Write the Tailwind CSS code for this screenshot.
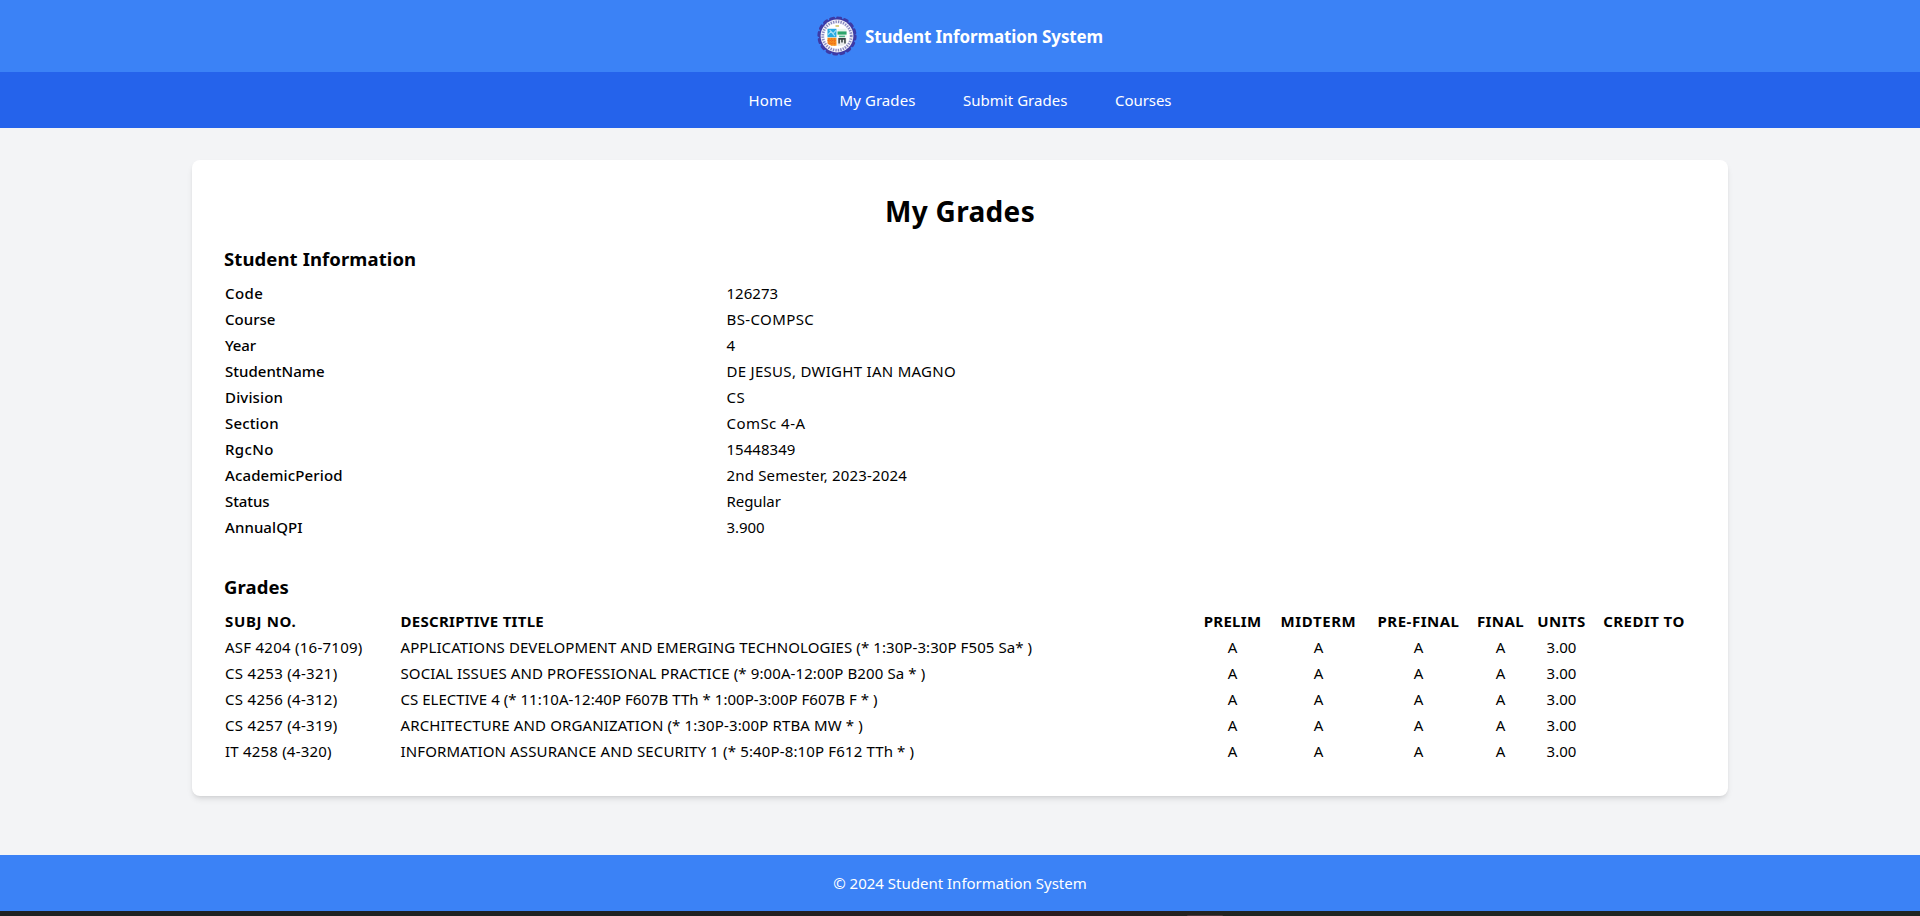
<!DOCTYPE html>
<html lang="en">
<head>
<meta charset="utf-8">
<title>Student Information System</title>
<script src="https://cdn.jsdelivr.net/npm/@tailwindcss/browser@4"></script>
</head>
<body class="flex h-screen flex-col overflow-hidden bg-[#f3f4f6] font-[family-name:'Noto_Sans','Open_Sans',sans-serif] text-[15px] leading-6 text-black">
<header class="flex h-[72px] shrink-0 items-center justify-center gap-2 bg-[#3b82f6] text-white">
  <svg class="size-10" viewBox="0 0 40 40" aria-hidden="true">
    <circle cx="20" cy="20" r="18" fill="#3d3aa5"/>
    <circle cx="20" cy="20" r="18.2" fill="none" stroke="#3d3aa5" stroke-width="2.8" stroke-linecap="round" stroke-dasharray="3.2 3.95"/>
    <circle cx="20" cy="20" r="16.4" fill="#f1f1fa"/>
    <circle cx="20" cy="20" r="14.2" fill="none" stroke="#8586bd" stroke-width="2.8" stroke-dasharray="1.3 1.2"/>
    <circle cx="20" cy="20" r="12.4" fill="#fff"/>
    <path d="M18.5 9h3.5v2h-3.5z" fill="#d8cf86"/>
    <g transform="translate(-1.2 -1) scale(1.06)">
      <path d="M11 13h8.5v8H11z" fill="#27a9e1"/>
      <path d="M11.5 18.5l3-3 2 2 2.5-3M13 14l5 6" stroke="#a7e0f7" fill="none"/>
      <path d="M20.5 13H29v8h-8.5z" fill="#e9f5ee"/>
      <path d="M20.5 15.5h8.5v3h-8.5z" fill="#2da56b"/>
      <path d="M22 19.5h5.5v1.5H22z" fill="#4bb184"/>
      <path d="M11 21.5h8.5V29H15q-4-1-4-4z" fill="#f7941d"/>
      <path d="M12.5 22v6M15 22v7M17.5 22v7M11 24h8.5M11 26.5h8.5" stroke="#e85f1c" stroke-width=".8" stroke-dasharray="1.2 1"/>
      <path d="M20.5 21.5H29V25q0 3-4 4h-4.5z" fill="#e7e9ea"/>
      <path d="M22 27v-4.5h5.5V27M24.700 23v3" stroke="#3b4546" stroke-width="1.5" fill="none"/>
    </g>
  </svg>
  <h1 class="pt-px text-[17px] leading-7 font-bold tracking-[-0.11px]">Student Information System</h1>
</header>
<nav class="flex h-14 shrink-0 items-center justify-center gap-[47.5px] bg-[#2563eb] text-white">
  <a class="tracking-[0.2px]">Home</a>
  <a class="tracking-[0.08px]">My Grades</a>
  <a class="tracking-[0.035px]">Submit Grades</a>
  <a class="tracking-[-0.05px]">Courses</a>
</nav>
<main class="mx-auto my-8 w-[1536px] shrink-0 rounded-lg bg-white p-8 shadow-md">
  <h2 class="mb-[15px] pt-px text-center text-[28px] leading-9 font-bold tracking-[0.32px]">My Grades</h2>
  <h3 class="mb-[7px] pt-px text-[18.5px] leading-7 font-bold tracking-[0.1px]">Student Information</h3>
  <table class="mb-8 w-full table-fixed">
    <colgroup><col class="w-[501.5px]"><col></colgroup>
    <tbody>
      <tr><th class="p-px text-left font-medium tracking-[0.42px]">Code</th><td class="p-px tracking-[0.04px]">126273</td></tr>
      <tr><th class="p-px text-left font-medium tracking-[0.02px]">Course</th><td class="p-px tracking-[0.4px]">BS-COMPSC</td></tr>
      <tr><th class="p-px text-left font-medium tracking-[-0.18px]">Year</th><td class="p-px">4</td></tr>
      <tr><th class="p-px text-left font-medium tracking-[0.02px]">StudentName</th><td class="p-px tracking-[0.29px]">DE JESUS, DWIGHT IAN MAGNO</td></tr>
      <tr><th class="p-px text-left font-medium tracking-[0.16px]">Division</th><td class="p-px tracking-[0.4px]">CS</td></tr>
      <tr><th class="p-px text-left font-medium tracking-[0.16px]">Section</th><td class="p-px tracking-[0.45px]">ComSc 4-A</td></tr>
      <tr><th class="p-px text-left font-medium tracking-[0.37px]">RgcNo</th><td class="p-px tracking-[0.04px]">15448349</td></tr>
      <tr><th class="p-px text-left font-medium tracking-[0.12px]">AcademicPeriod</th><td class="p-px tracking-[0.18px]">2nd Semester, 2023-2024</td></tr>
      <tr><th class="p-px text-left font-medium tracking-[-0.08px]">Status</th><td class="p-px tracking-[-0.07px]">Regular</td></tr>
      <tr><th class="p-px text-left font-medium tracking-[0.08px]">AnnualQPI</th><td class="p-px tracking-[-0.07px]">3.900</td></tr>
    </tbody>
  </table>
  <h3 class="mb-[7px] pt-px text-[18.5px] leading-7 font-bold tracking-[0.1px]">Grades</h3>
  <table class="w-full table-fixed text-center">
    <colgroup><col class="w-[175.5px]"><col class="w-[795.5px]"><col class="w-[75px]"><col class="w-[97px]"><col class="w-[103px]"><col class="w-[61px]"><col class="w-[61px]"><col></colgroup>
    <thead>
      <tr class="whitespace-nowrap">
        <th class="p-px text-left tracking-[0.65px]">SUBJ NO.</th>
        <th class="p-px text-left tracking-[0.28px]">DESCRIPTIVE TITLE</th>
        <th class="p-px tracking-[0.3px]">PRELIM</th>
        <th class="p-px tracking-[0.6px]">MIDTERM</th>
        <th class="p-px tracking-[0.5px]">PRE-FINAL</th>
        <th class="p-px tracking-[0.4px]">FINAL</th>
        <th class="p-px tracking-[0.4px]">UNITS</th>
        <th class="p-px tracking-[0.45px]">CREDIT TO</th>
      </tr>
    </thead>
    <tbody>
      <tr><td class="p-px text-left tracking-[0.25px]">ASF 4204 (16-7109)</td><td class="p-px text-left tracking-[0.08px]">APPLICATIONS DEVELOPMENT AND EMERGING TECHNOLOGIES (* 1:30P-3:30P F505 Sa* )</td><td>A</td><td>A</td><td>A</td><td>A</td><td>3.00</td><td></td></tr>
      <tr><td class="p-px text-left tracking-[0.3px]">CS 4253 (4-321)</td><td class="p-px text-left tracking-[0.1px]">SOCIAL ISSUES AND PROFESSIONAL PRACTICE (* 9:00A-12:00P B200 Sa * )</td><td>A</td><td>A</td><td>A</td><td>A</td><td>3.00</td><td></td></tr>
      <tr><td class="p-px text-left tracking-[0.3px]">CS 4256 (4-312)</td><td class="p-px text-left tracking-[0.03px]">CS ELECTIVE 4 (* 11:10A-12:40P F607B TTh * 1:00P-3:00P F607B F * )</td><td>A</td><td>A</td><td>A</td><td>A</td><td>3.00</td><td></td></tr>
      <tr><td class="p-px text-left tracking-[0.3px]">CS 4257 (4-319)</td><td class="p-px text-left tracking-[0.13px]">ARCHITECTURE AND ORGANIZATION (* 1:30P-3:00P RTBA MW * )</td><td>A</td><td>A</td><td>A</td><td>A</td><td>3.00</td><td></td></tr>
      <tr><td class="p-px text-left tracking-[0.2px]">IT 4258 (4-320)</td><td class="p-px text-left tracking-[0.14px]">INFORMATION ASSURANCE AND SECURITY 1 (* 5:40P-8:10P F612 TTh * )</td><td>A</td><td>A</td><td>A</td><td>A</td><td>3.00</td><td></td></tr>
    </tbody>
  </table>
</main>
<footer class="mt-auto flex h-14 shrink-0 items-center justify-center bg-[#3b82f6] text-white">© 2024 Student Information System</footer>
<div class="flex h-[5px] shrink-0 items-end bg-linear-to-r from-[#202122] from-35% via-[#2c1b1e] via-55% to-[#202522] to-65%">
  <div class="ml-[1187px] h-px w-9 rounded-t bg-[#4a3539]"></div>
</div>
</body>
</html>
